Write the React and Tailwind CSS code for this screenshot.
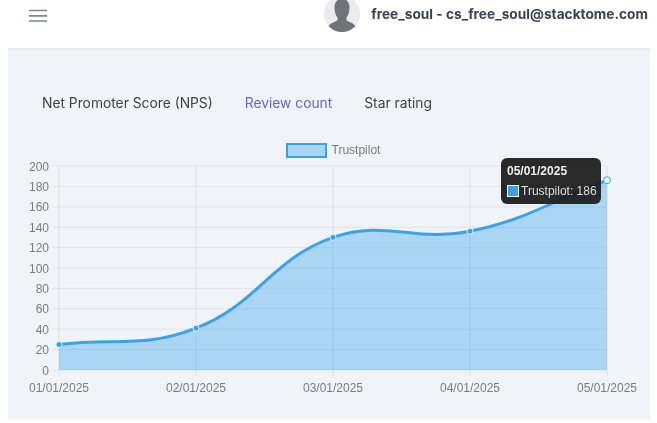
import React from "react";

const X0 = 59, DX = 137, Y0 = 370, SY = 1.02;
const values = [25, 41, 130, 136, 186];
const pts = values.map((v, i) => [X0 + DX * i, Y0 - v * SY]);
const labels = ["01/01/2025", "02/01/2025", "03/01/2025", "04/01/2025", "05/01/2025"];

function spline() {
  const t = 0.42;
  const cps = pts.map((p, i) => {
    const a = pts[Math.max(i - 1, 0)], b = pts[Math.min(i + 1, pts.length - 1)];
    const d01 = Math.hypot(p[0] - a[0], p[1] - a[1]);
    const d12 = Math.hypot(b[0] - p[0], b[1] - p[1]);
    const tot = d01 + d12 || 1;
    const fa = (t * d01) / tot, fb = (t * d12) / tot;
    return {
      prev: [p[0] - fa * (b[0] - a[0]), p[1] - fa * (b[1] - a[1])],
      next: [p[0] + fb * (b[0] - a[0]), p[1] + fb * (b[1] - a[1])],
    };
  });
  let d = `M${pts[0][0]} ${pts[0][1]}`;
  for (let i = 1; i < pts.length; i++) {
    d += ` C${cps[i - 1].next[0]} ${cps[i - 1].next[1]} ${cps[i].prev[0]} ${cps[i].prev[1]} ${pts[i][0]} ${pts[i][1]}`;
  }
  return d;
}

function Chart() {
  const line = spline();
  const area = `${line} L${pts[4][0]} ${Y0} L${X0} ${Y0} Z`;
  const font = { fontFamily: '"Liberation Sans", Arial, sans-serif', fontSize: 12 };
  return (
    <svg width="642" height="238" viewBox="8 162 642 238" className="block overflow-visible">
      {Array.from({ length: 11 }, (_, i) => {
        const y = Y0 - i * 20.4;
        return (
          <g key={i}>
            <line x1="53" x2="607" y1={y} y2={y} stroke="#e0e3e7" strokeWidth="1" />
            <text x="49" y={y + 4.5} textAnchor="end" fill="#7b7b7b" style={font}>{i * 20}</text>
          </g>
        );
      })}
      {pts.map((p, i) => (
        <g key={i}>
          <line x1={p[0]} x2={p[0]} y1="166" y2="376" stroke="#dcdfe3" strokeWidth="1" />
          <text x={p[0]} y="392" textAnchor="middle" fill="#7b7b7b" style={font}>{labels[i]}</text>
        </g>
      ))}
      <path d={area} fill="#36a2eb" fillOpacity="0.38" />
      <path d={line} fill="none" stroke="#3aa3e8" strokeWidth="3" />
      {pts.slice(0, 4).map((p, i) => (
        <circle key={i} cx={p[0]} cy={p[1]} r="3" fill="#36a2eb" stroke="#e8f1f8" strokeWidth="1" />
      ))}
      <circle cx={pts[4][0]} cy={pts[4][1]} r="3.5" fill="#f0f4f8" stroke="#36a2eb" strokeWidth="1" />
    </svg>
  );
}

export default function App() {
  return (
    <div className="w-[657px] h-[423px] overflow-hidden bg-white text-[#3c4250] blur-[0.5px]" style={{ fontFamily: 'Inter, sans-serif' }}>
      <header className="h-[48px] flex items-start justify-between pl-[29px] pr-[9px]">
        <svg width="18" height="14" viewBox="0 0 18 14" className="mt-[9px]" fill="none" stroke="#7d8598" strokeWidth="1.7">
          <path d="M0 1.500h18M0 6.800h18M0 12h18" />
        </svg>
        <div className="flex items-start gap-[11px]">
          <div className="w-[36px] h-[36px] rounded-full bg-[#e9ebed] overflow-hidden -mt-[4px] shrink-0">
            <svg viewBox="0 0 36 36" width="36" height="36">
              <path d="M18 3c5 0 7.500 3.500 7.500 8.500 0 4.500-1.500 8.500-3 10v2.500c0 1.500 6.500 2.500 8.500 5.500 1 1.500 1 3 1 6.500H4c0-3.500 0-5 1-6.500 2-3 8.500-4 8.500-5.500v-2.500c-1.500-1.500-3-5.500-3-10C10.500 6.500 13 3 18 3z" fill="#6f747b" />
            </svg>
          </div>
          <span className="text-[13.7px] leading-[28px] font-bold text-[#3b4252] whitespace-nowrap">free_soul - cs_free_soul@stacktome.com</span>
        </div>
      </header>
      <main className="ml-[8px] w-[642px] h-[372px] bg-[#f0f4f8] border-t-2 border-[#e7e9ec]">
        <nav className="flex items-start gap-[32px] pl-[34px] pt-[44px] text-[13.8px] leading-[18px] h-[88px]">
          <span className="whitespace-nowrap">Net Promoter Score (NPS)</span>
          <span className="whitespace-nowrap text-[#6a5fdc]">Review count</span>
          <span className="whitespace-nowrap">Star rating</span>
        </nav>
        <section className="relative">
          <div className="flex items-center justify-center gap-[5px] h-[24px] pl-[8px] text-[12px] text-[#7b7b7b]" style={{ fontFamily: '"Liberation Sans", sans-serif' }}>
            <span className="w-[41px] h-[15px] bg-[#a6d5f6] border-2 border-[#36a2eb]" />
            <span>Trustpilot</span>
          </div>
          <Chart />
          <div className="absolute left-[493px] top-[20px] w-[100px] h-[46px] rounded-[6px] bg-[#1f1f20]/95 text-white px-[6px] pt-[6px] text-[12px] leading-[14px]" style={{ fontFamily: '"Liberation Sans", sans-serif' }}>
            <div className="font-bold text-[#eeeeee]">05/01/2025</div>
            <div className="flex items-center gap-[2px] mt-[6px] text-[#dddddd] whitespace-nowrap">
              <span className="w-[12px] h-[12px] bg-[#36a2eb] border border-white shrink-0" />
              <span>Trustpilot: 186</span>
            </div>
          </div>
        </section>
      </main>
    </div>
  );
}
